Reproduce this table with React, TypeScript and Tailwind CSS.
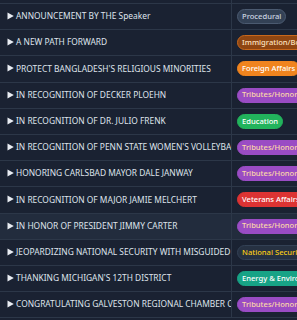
import React from "react";

type Row = { title: string; tag: string; cls: string; hl?: boolean };

const rows: Row[] = [
  { title: "ANNOUNCEMENT BY THE Speaker", tag: "Procedural", cls: "bg-[#334155] border-[#4b5a70] text-[#cbd5e1]" },
  { title: "A NEW PATH FORWARD", tag: "Immigration/Border", cls: "bg-[#8f4612] border-[#c8681c] text-[#fde2c0]" },
  { title: "PROTECT BANGLADESH'S RELIGIOUS MINORITIES", tag: "Foreign Affairs", cls: "bg-[#f0841e] border-[#f0841e] text-white" },
  { title: "IN RECOGNITION OF DECKER PLOEHN", tag: "Tributes/Honorary", cls: "bg-[#9a4cc4] border-[#9a4cc4] text-[#fcd9a8]" },
  { title: "IN RECOGNITION OF DR. JULIO FRENK", tag: "Education", cls: "bg-[#22b35c] border-[#22b35c] text-white" },
  { title: "IN RECOGNITION OF PENN STATE WOMEN'S VOLLEYBALL", tag: "Tributes/Honorary", cls: "bg-[#9a4cc4] border-[#9a4cc4] text-[#fcd9a8]" },
  { title: "HONORING CARLSBAD MAYOR DALE JANWAY", tag: "Tributes/Honorary", cls: "bg-[#9a4cc4] border-[#9a4cc4] text-[#fcd9a8]" },
  { title: "IN RECOGNITION OF MAJOR JAMIE MELCHERT", tag: "Veterans Affairs", cls: "bg-[#dc3333] border-[#dc3333] text-white" },
  { title: "IN HONOR OF PRESIDENT JIMMY CARTER", tag: "Tributes/Honorary", cls: "bg-[#9a4cc4] border-[#9a4cc4] text-[#fcd9a8]", hl: true },
  { title: "JEOPARDIZING NATIONAL SECURITY WITH MISGUIDED POLICIES", tag: "National Security", cls: "bg-[#263142] border-[#334155] text-[#facc15]" },
  { title: "THANKING MICHIGAN'S 12TH DISTRICT", tag: "Energy & Environment", cls: "bg-[#17a386] border-[#17a386] text-white" },
  { title: "CONGRATULATING GALVESTON REGIONAL CHAMBER OF COMMERCE", tag: "Tributes/Honorary", cls: "bg-[#9a4cc4] border-[#9a4cc4] text-[#fcd9a8]" },
];

export default function App() {
  return (
    <div
      className="w-[297px] h-[320px] overflow-hidden bg-[#1a2232] text-[#dfe4ec]"
      style={{ fontFamily: '"Noto Sans", "Open Sans", sans-serif' }}
    >
      <div className="flex h-[4px] border-b border-[#2c3748]">
        <div className="w-[232px] shrink-0 border-r border-[#2c3748]" />
      </div>
      {rows.map((r, i) => (
        <div
          key={i}
          className={`flex h-[26.2px] border-b border-[#2c3748] ${r.hl ? "bg-[#222c3d]" : ""}`}
        >
          <div className="w-[232px] shrink-0 border-r border-[#2c3748] overflow-hidden whitespace-nowrap flex items-center pl-[7px] text-[8.4px]">
            <svg width="7" height="8" viewBox="0 0 7 8" className="shrink-0 mr-[2px] -mt-[1px]">
              <path d="M0.5 0.5 L6.8 4 L0.5 7.5 Z" fill="#e8ecf2" />
            </svg>
            <span>{r.title}</span>
          </div>
          <div className="flex items-center pl-[5px] whitespace-nowrap">
            <span
              className={`inline-flex items-center h-[15px] px-[4px] rounded-full border text-[7.6px] font-medium ${r.cls}`}
            >
              {r.tag}
            </span>
          </div>
        </div>
      ))}
    </div>
  );
}
